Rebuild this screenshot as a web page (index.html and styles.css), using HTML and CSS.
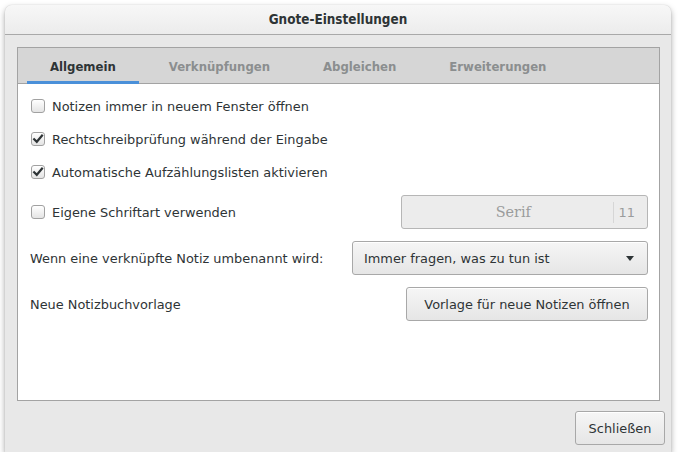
FILE: index.html
```
<!DOCTYPE html>
<html>
<head>
<meta charset="utf-8">
<title>Gnote-Einstellungen</title>
<link rel="stylesheet" href="styles.css">
</head>
<body>
<div class="window">
  <div class="titlebar">Gnote-Einstellungen</div>
  <div class="dialog-body">
    <div class="notebook">
      <div class="tabs">
        <div class="tab active">Allgemein</div>
        <div class="tab">Verknüpfungen</div>
        <div class="tab">Abgleichen</div>
        <div class="tab">Erweiterungen</div>
      </div>
      <div class="page">
        <label class="check-row"><span class="checkbox"></span>Notizen immer in neuem Fenster öffnen</label>
        <label class="check-row"><span class="checkbox checked"><svg viewBox="0 0 14 14" width="14" height="14"><path d="M3.2 7.2 L5.8 9.8 L11 3.6" fill="none" stroke="#2e3436" stroke-width="2.2" stroke-linecap="square"/></svg></span>Rechtschreibprüfung während der Eingabe</label>
        <label class="check-row"><span class="checkbox checked"><svg viewBox="0 0 14 14" width="14" height="14"><path d="M3.2 7.2 L5.8 9.8 L11 3.6" fill="none" stroke="#2e3436" stroke-width="2.2" stroke-linecap="square"/></svg></span>Automatische Aufzählungslisten aktivieren</label>
        <div class="field-row font-row">
          <label class="check-row"><span class="checkbox"></span>Eigene Schriftart verwenden</label>
          <div class="fontbtn"><span class="font-name">Serif</span><span class="font-size">11</span></div>
        </div>
        <div class="field-row">
          <span class="label">Wenn eine verknüpfte Notiz umbenannt wird:</span>
          <div class="combo"><span>Immer fragen, was zu tun ist</span><span class="arrow"></span></div>
        </div>
        <div class="field-row">
          <span class="label">Neue Notizbuchvorlage</span>
          <div class="button template-btn">Vorlage für neue Notizen öffnen</div>
        </div>
      </div>
    </div>
    <div class="actions">
      <div class="button close-btn">Schließen</div>
    </div>
  </div>
</div>
</body>
</html>
```
FILE: styles.css
```
html, body {
  margin: 0;
  padding: 0;
  background: #ffffff;
}
body {
  font-family: "DejaVu Sans", sans-serif;
  font-size: 12.9px;
  color: #2e3436;
}
.window {
  margin: 5px 0 0 5px;
  width: 666px;
  height: 447px;
  background: #e8e8e8;
  border-radius: 7px 7px 0 0;
  box-shadow: 0 3px 6px rgba(0,0,0,0.35), 0 0 1px rgba(0,0,0,0.25);
  display: flex;
  flex-direction: column;
}
.titlebar {
  height: 29px;
  flex: none;
  border-bottom: 1px solid #a9a9a9;
  border-radius: 7px 7px 0 0;
  background: linear-gradient(#f7f7f7, #ececec);
  display: flex;
  align-items: center;
  justify-content: center;
  font-family: "DejaVu Sans Condensed", "DejaVu Sans", sans-serif;
  font-weight: bold;
  font-size: 13.4px;
  color: #2e3436;
}
.dialog-body {
  flex: 1;
  display: flex;
  flex-direction: column;
  padding: 12px 6px 0 12px;
}
.notebook {
  width: 641px;
  height: 352px;
  border: 1px solid #a3a3a3;
  background: #ffffff;
  display: flex;
  flex-direction: column;
}
.tabs {
  height: 35px;
  flex: none;
  background: #d6d6d6;
  border-bottom: 1px solid #a3a3a3;
  display: flex;
  gap: 7px;
  padding-left: 9px;
}
.tab {
  height: 36px;
  box-sizing: border-box;
  padding: 0 23px;
  display: flex;
  align-items: center;
  font-family: "DejaVu Sans Condensed", "DejaVu Sans", sans-serif;
  font-weight: bold;
  font-size: 13px;
  color: #8b8e8f;
}
.tab.active {
  color: #2e3436;
  box-shadow: inset 0 -3px 0 #4a90d9;
}
.page {
  flex: 1;
  padding: 12px 11px 0 12px;
  display: flex;
  flex-direction: column;
  gap: 13px;
}
.page > .field-row + .field-row {
  margin-top: -1px;
}
.check-row {
  height: 20px;
  display: flex;
  align-items: center;
}
.checkbox {
  width: 14px;
  height: 14px;
  box-sizing: border-box;
  margin: 0 7px 0 1px;
  border: 1px solid #a1a1a1;
  border-radius: 3px;
  background: linear-gradient(#ffffff, #e4e4e4);
  flex: none;
  position: relative;
}
.checkbox svg {
  position: absolute;
  left: -1px;
  top: -1px;
}
.field-row {
  height: 34px;
  display: flex;
  align-items: center;
  justify-content: space-between;
}
.fontbtn {
  width: 247px;
  height: 34px;
  box-sizing: border-box;
  border: 1px solid #b6b6b6;
  border-radius: 3px;
  background: #ececec;
  display: flex;
  align-items: center;
  color: #9a9c9c;
}
.font-name {
  flex: 1;
  text-align: center;
  font-family: "DejaVu Serif", serif;
  font-size: 14.4px;
  padding-left: 12px;
}
.font-size {
  border-left: 1px solid #d6d6d6;
  height: 21px;
  display: flex;
  align-items: center;
  padding: 0 12px 0 5px;
}
.combo, .button {
  height: 34px;
  box-sizing: border-box;
  border: 1px solid #a8a8a8;
  border-radius: 3px;
  background: linear-gradient(#f6f6f6, #e6e6e6);
  box-shadow: inset 0 1px 0 #ffffff;
  display: flex;
  align-items: center;
  color: #2e3436;
}
.combo {
  width: 296px;
  padding: 0 12px 0 11px;
  justify-content: space-between;
}
.arrow {
  width: 0;
  height: 0;
  border-left: 4.5px solid transparent;
  border-right: 4.5px solid transparent;
  border-top: 5px solid #2e3436;
  margin-right: 1px;
}
.button {
  justify-content: center;
}
.template-btn {
  width: 242px;
}
.actions {
  display: flex;
  justify-content: flex-end;
  margin-top: 10px;
}
.close-btn {
  width: 90px;
}
```
